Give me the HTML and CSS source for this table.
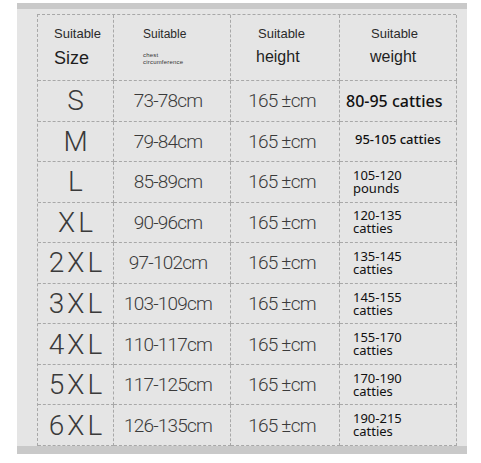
FILE: index.html
```html
<!DOCTYPE html>
<html>
<head>
<meta charset="utf-8">
<link rel="stylesheet" href="styles.css">
</head>
<body>
<div class="panel">
  <div class="strip"></div>
  <div class="body">
    <div class="table">
      <div class="cell head c1"><span class="h-top">Suitable</span><span class="h-big">Size</span></div>
      <div class="cell head c2"><span class="h-top small">Suitable</span><span class="h-tiny">chest<br>circumference</span></div>
      <div class="cell head c3"><span class="h-top">Suitable</span><span class="h-mid">height</span></div>
      <div class="cell head c4"><span class="h-top">Suitable</span><span class="h-mid">weight</span></div>

      <div class="cell size">S</div><div class="cell chest">73-78cm</div><div class="cell height">165 ±cm</div><div class="cell weight big">80-95 catties</div>
      <div class="cell size">M</div><div class="cell chest">79-84cm</div><div class="cell height">165 ±cm</div><div class="cell weight one">95-105 catties</div>
      <div class="cell size">L</div><div class="cell chest">85-89cm</div><div class="cell height">165 ±cm</div><div class="cell weight"><span class="ln">105-120</span><span class="ln">pounds</span></div>
      <div class="cell size">XL</div><div class="cell chest">90-96cm</div><div class="cell height">165 ±cm</div><div class="cell weight"><span class="ln">120-135</span><span class="ln">catties</span></div>
      <div class="cell size">2XL</div><div class="cell chest">97-102cm</div><div class="cell height">165 ±cm</div><div class="cell weight"><span class="ln">135-145</span><span class="ln">catties</span></div>
      <div class="cell size">3XL</div><div class="cell chest">103-109cm</div><div class="cell height">165 ±cm</div><div class="cell weight"><span class="ln">145-155</span><span class="ln">catties</span></div>
      <div class="cell size">4XL</div><div class="cell chest">110-117cm</div><div class="cell height">165 ±cm</div><div class="cell weight"><span class="ln">155-170</span><span class="ln">catties</span></div>
      <div class="cell size">5XL</div><div class="cell chest">117-125cm</div><div class="cell height">165 ±cm</div><div class="cell weight"><span class="ln">170-190</span><span class="ln">catties</span></div>
      <div class="cell size">6XL</div><div class="cell chest">126-135cm</div><div class="cell height">165 ±cm</div><div class="cell weight"><span class="ln">190-215</span><span class="ln">catties</span></div>
    </div>
  </div>
  <div class="strip bottom"></div>
</div>
</body>
</html>
```

FILE: styles.css
```css
html, body {
  margin: 0;
  padding: 0;
  background: #ffffff;
}
body {
  font-family: "Liberation Sans", Arial, sans-serif;
  color: #333;
}
.panel {
  margin: 3px 0 0 17px;
  width: 450px;
  background: #e5e5e5;
}
.strip {
  height: 6px;
  background: #c9c9c9;
}
.strip.bottom {
  height: 8px;
}
.body {
  padding: 5px 11px 0 20px;
}
.table {
  display: grid;
  grid-template-columns: 76px 117px 109px 117px;
  grid-template-rows: 66px repeat(9, 40.55px);
  border-top: 1px dashed #a8a8a8;
  border-left: 1px dashed #a8a8a8;
  box-sizing: border-box;
}
.cell {
  border-right: 1px dashed #a8a8a8;
  border-bottom: 1px dashed #a8a8a8;
  display: flex;
  align-items: center;
  box-sizing: border-box;
  min-width: 0;
}
.head {
  flex-direction: column;
  align-items: flex-start;
  justify-content: flex-start;
  padding-top: 11px;
}
.head.c1 { padding-left: 16px; }
.head.c2 { padding-left: 29px; }
.head.c3 { padding-left: 25px; }
.head.c4 { padding-left: 30px; }
.h-top {
  font-size: 13px;
  color: #2a2a2a;
  line-height: 16px;
}
.head.c3 .h-top { margin-left: 2px; }
.head.c4 .h-top { margin-left: 1px; }
.h-top.small { font-size: 12px; }
.h-big {
  font-size: 18px;
  color: #1e1e1e;
  margin-top: 6px;
  line-height: 20px;
}
.h-mid {
  font-size: 16px;
  color: #1e1e1e;
  margin-top: 5px;
  line-height: 20px;
}
.h-tiny {
  font-size: 6px;
  line-height: 7px;
  color: #333;
  margin-top: 10px;
  letter-spacing: 0.2px;
}
.size {
  justify-content: center;
  font-family: "Roboto", "Liberation Sans", sans-serif;
  font-weight: 300;
  font-size: 28px;
  letter-spacing: 3px;
  color: #3a3a3a;
  padding-left: 3px;
}
.chest, .height {
  justify-content: center;
  font-family: "Roboto", "Liberation Sans", sans-serif;
  font-weight: 300;
  font-size: 19px;
  letter-spacing: -0.8px;
  color: #3a3a3a;
}
.chest { padding-right: 8px; }
.height { padding-right: 6px; }
.weight {
  font-family: "Noto Sans", "Liberation Sans", sans-serif;
  font-weight: 400;
  font-size: 13px;
  color: #111;
  padding-left: 13px;
  flex-direction: column;
  align-items: flex-start;
  justify-content: center;
}
.ln {
  display: block;
  line-height: 13px;
}
.weight.big {
  font-size: 16px;
  font-weight: 500;
  padding-left: 6px;
}
.weight.one {
  padding-left: 15px;
  font-size: 13px;
  font-weight: 500;
  padding-bottom: 4px;
}
```
